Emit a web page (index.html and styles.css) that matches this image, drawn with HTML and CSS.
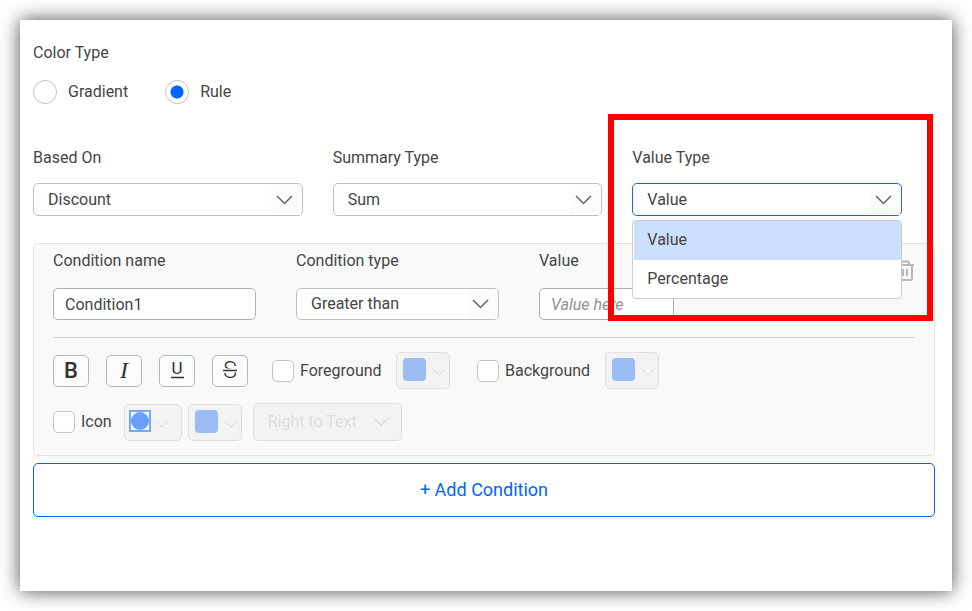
FILE: index.html
```html
<!DOCTYPE html>
<html lang="en">
<head>
<meta charset="utf-8">
<meta name="viewport" content="width=device-width, initial-scale=1">
<title>Conditional formatting</title>
<link rel="stylesheet" href="styles.css">
</head>
<body>
<main class="card">
  <fieldset class="color-type">
    <legend>Color Type</legend>
    <div class="radios">
      <label class="radio"><input type="radio" name="color-type">Gradient</label>
      <label class="radio"><input type="radio" name="color-type" checked>Rule</label>
    </div>
  </fieldset>

  <section class="fields">
    <div class="field">
      <label for="based-on">Based On</label>
      <div class="select">
        <select id="based-on"><option>Discount</option></select>
        <svg class="arrow" viewBox="0 0 30 30"><path d="M6 11l7.500 7.500L21 11"/></svg>
      </div>
    </div>
    <div class="field">
      <label for="summary-type">Summary Type</label>
      <div class="select">
        <select id="summary-type"><option>Sum</option></select>
        <svg class="arrow" viewBox="0 0 30 30"><path d="M6 11l7.500 7.500L21 11"/></svg>
      </div>
    </div>
    <div class="field value-type">
      <label for="value-type">Value Type</label>
      <div class="select open">
        <select id="value-type"><option>Value</option><option>Percentage</option></select>
        <svg class="arrow" viewBox="0 0 30 30"><path d="M6 11l7.500 7.500L21 11"/></svg>
        <ul class="menu" role="listbox" aria-label="Value Type">
          <li role="option" aria-selected="true">Value</li>
          <li role="option" aria-selected="false">Percentage</li>
        </ul>
      </div>
      <div class="highlight"></div>
    </div>
  </section>

  <section class="condition">
    <div class="condition-fields">
      <div class="field">
        <label for="name">Condition name</label>
        <input class="text" id="name" type="text" value="Condition1">
      </div>
      <div class="field">
        <label for="type">Condition type</label>
        <div class="select">
          <select id="type"><option>Greater than</option></select>
          <svg class="arrow" viewBox="0 0 30 30"><path d="M6 11l7.500 7.500L21 11"/></svg>
        </div>
      </div>
      <div class="field">
        <label for="value">Value</label>
        <input class="text" id="value" type="text" placeholder="Value here">
      </div>
      <button class="delete" type="button" aria-label="Delete condition">
        <svg viewBox="0 0 20 22"><path d="M1 5h18M6 5V3q0-1.500 1.500-1.500h5Q14 1.500 14 3v2M3 5v13.500q0 1.500 1.500 1.500h11q1.500 0 1.500-1.500V5M8 9v7M12 9v7"/></svg>
      </button>
    </div>

    <div class="format-row">
      <div class="styles">
        <button class="style" type="button" aria-label="Bold"><svg viewBox="-5 -5 30 30"><text class="bold" x="10" y="17">B</text></svg></button>
        <button class="style" type="button" aria-label="Italic"><svg viewBox="-5 -5 30 30"><text class="italic" x="10" y="17">I</text></svg></button>
        <button class="style" type="button" aria-label="Underline"><svg viewBox="-5 -5 30 30"><text class="under" x="10" y="13">U</text><path d="M4 16.500h13"/></svg></button>
        <button class="style" type="button" aria-label="Strikethrough"><svg viewBox="-5 -5 30 30"><text class="strike" x="10" y="17">S</text><path class="gap" d="M2 9.500h16"/><path d="M3 9.500h14"/></svg></button>
      </div>
      <div class="group">
        <label class="check wide"><input type="checkbox">Foreground</label>
        <button class="swatch" type="button" disabled aria-label="Foreground color"><span class="chip"></span><svg class="mini" viewBox="0 0 14 14"><path d="M1 4l6 6 6-6"/></svg></button>
      </div>
      <div class="group">
        <label class="check wide"><input type="checkbox">Background</label>
        <button class="swatch" type="button" disabled aria-label="Background color"><span class="chip"></span><svg class="mini" viewBox="0 0 14 14"><path d="M1 4l6 6 6-6"/></svg></button>
      </div>
    </div>

    <div class="icon-row">
      <label class="check"><input type="checkbox">Icon</label>
      <button class="swatch shape" type="button" disabled aria-label="Icon shape"><svg class="dot" viewBox="0 0 22 22"><rect x="1" y="1" width="20" height="20"/><circle cx="11" cy="11" r="9"/></svg><svg class="mini" viewBox="0 0 14 14"><path d="M1 4l6 6 6-6"/></svg></button>
      <button class="swatch" type="button" disabled aria-label="Icon color"><span class="chip"></span><svg class="mini" viewBox="0 0 14 14"><path d="M1 4l6 6 6-6"/></svg></button>
      <div class="select position">
        <select aria-label="Icon position" disabled><option>Right to Text</option></select>
        <svg class="arrow" viewBox="0 0 30 30"><path d="M5 12l6 6 6-6"/></svg>
      </div>
    </div>
  </section>

  <button class="add" type="button">+ Add Condition</button>
</main>
</body>
</html>
```
FILE: styles.css
```css
* { box-sizing: border-box; }

body {
  margin: 0;
  padding: 20px;
  background: #fff;
  color: #454545;
  font: 16px/24px Roboto, sans-serif;
}

button, input, select { font: inherit; color: inherit; margin: 0; }
svg { fill: none; stroke: currentColor; display: block; }

.card {
  min-height: calc(100vh - 40px);
  padding: 21px 17px 20px 13px;
  background: #fff;
  box-shadow: 0 0 18px rgba(0, 0, 0, 0.7);
}

.color-type { margin: 0; padding: 0; border: 0; }
.color-type legend { padding: 0; }
.radios { display: flex; gap: 37px; margin-top: 15px; }
.radio { display: flex; align-items: center; gap: 11px; }
.radio input {
  appearance: none;
  width: 24px;
  height: 24px;
  border: 1px solid #c4c4c4;
  border-radius: 50%;
  background: #fff;
}
.radio input:checked { background: radial-gradient(circle, #06f 6px, #fff 7px); }

.fields {
  display: grid;
  grid-template-columns: repeat(3, 1fr);
  gap: 30px;
  margin-top: 42px;
  padding-right: 33px;
}
.field { display: flex; flex-direction: column; gap: 13px; min-width: 0; }

.select { display: grid; grid-template-columns: 1fr 32px; position: relative; height: 33px; }
.select select {
  grid-area: 1 / 1 / 2 / 3;
  appearance: none;
  width: 100%;
  padding: 0 32px 0 14px;
  border: 1px solid #c0c0c0;
  border-radius: 5px;
  background: #fff;
  outline: 0;
}
.select .arrow {
  grid-area: 1 / 2;
  align-self: center;
  width: 30px;
  height: 30px;
  background: #fcfcfc;
  stroke: #666;
  stroke-width: 1.500;
  pointer-events: none;
  z-index: 1;
}
.select.open select { border-color: #1a66ee; }

.value-type { position: relative; }
.menu {
  position: absolute;
  z-index: 3;
  top: 37px;
  left: 0;
  right: 0;
  margin: 0;
  padding: 0 0 0 1px;
  list-style: none;
  background: #fff;
  border: 1px solid #ccc;
  border-radius: 4px;
}
.menu li { padding: 7px 14px 8px 13px; }
.menu li + li { padding-bottom: 7px; }
.menu li[aria-selected="true"] { background: #ccdfff; }
.highlight {
  position: absolute;
  z-index: 2;
  inset: -32px -31px -105px -24px;
  border: 6px solid #f00;
  pointer-events: none;
}

.condition {
  margin-top: 27px;
  padding: 5px 19px 14px;
  border: 1px solid #e3e3e3;
  border-radius: 5px;
  background: #f9f9f9;
}
.condition-fields {
  display: grid;
  grid-template-columns: 203fr 203fr 135fr 201fr;
  gap: 40px;
  padding-bottom: 17px;
  border-bottom: 1px solid #d6d6d6;
}
.condition-fields .field { gap: 15px; }
.condition-fields .select { height: 32px; }
.text {
  width: 100%;
  height: 32px;
  padding: 0 11px;
  border: 1px solid #b0b0b0;
  border-radius: 5px;
  background: #fff;
}
.text::placeholder { color: #909090; font-style: italic; }
.delete {
  justify-self: end;
  align-self: start;
  margin-top: 11px;
  padding: 0;
  border: 0;
  background: none;
  color: #b8b8b8;
}
.delete svg { width: 20px; height: 22px; stroke-width: 2; }

.format-row { display: flex; align-items: center; margin-top: 14px; }
.styles { display: flex; gap: 17px; margin-right: 24px; }
.style {
  display: grid;
  place-items: center;
  width: 36px;
  height: 32px;
  padding: 0;
  border: 1px solid #b5b5b5;
  border-radius: 5px;
  background: #fbfbfb;
  color: #333;
}
.style svg { width: 30px; height: 30px; stroke-width: 1.500; }
.style text { fill: #333; stroke: none; text-anchor: middle; }
.style .bold { font: 500 22px/22px Roboto, sans-serif; }
.style .italic { font: italic 24px/24px "Liberation Serif", serif; }
.style .under { font: 400 17px/17px Roboto, sans-serif; }
.style .strike { font: 300 23px/23px Roboto, sans-serif; }
.style .gap { stroke: #fbfbfb; stroke-width: 4; }

.group { display: flex; align-items: center; gap: 10px; margin-right: 27px; }
.check { display: flex; align-items: center; gap: 6px; }
.check.wide { min-width: 114px; }
.group + .group .check { min-width: 118px; }
.check input {
  appearance: none;
  width: 22px;
  height: 22px;
  border: 1px solid #c4c4c4;
  border-radius: 5px;
  background: #fff;
}

.swatch {
  display: flex;
  align-items: flex-start;
  justify-content: space-between;
  width: 54px;
  height: 37px;
  padding: 5px 3px 0 6px;
  border: 1px solid #e0e0e0;
  border-radius: 5px;
  background: #f3f3f3;
}
.chip { width: 23px; height: 23px; border-radius: 4px; background: #9bbcf4; }
.mini { width: 14px; height: 14px; margin-top: 7px; stroke: #dcdcdc; }
.shape { width: 58px; padding: 5px 12px 0 4px; }
.dot { width: 22px; height: 22px; }
.dot rect { fill: #fff; stroke: #75a8ff; stroke-width: 2; }
.dot circle { fill: #669fff; stroke: none; }

.icon-row { display: flex; align-items: center; gap: 6px; margin-top: 14px; }
.icon-row .check { margin-right: 6px; }
.position { width: 149px; height: 38px; margin-left: 5px; }
.position select { border-color: #e0e0e0; background: #f3f3f3; color: #dedede; opacity: 1; }
.position .arrow { background: none; stroke: #dcdcdc; }

.add {
  display: block;
  width: 100%;
  height: 54px;
  margin-top: 7px;
  border: 1px solid #06f;
  border-radius: 5px;
  background: #fff;
  color: #06f;
  font-size: 18px;
}
```
